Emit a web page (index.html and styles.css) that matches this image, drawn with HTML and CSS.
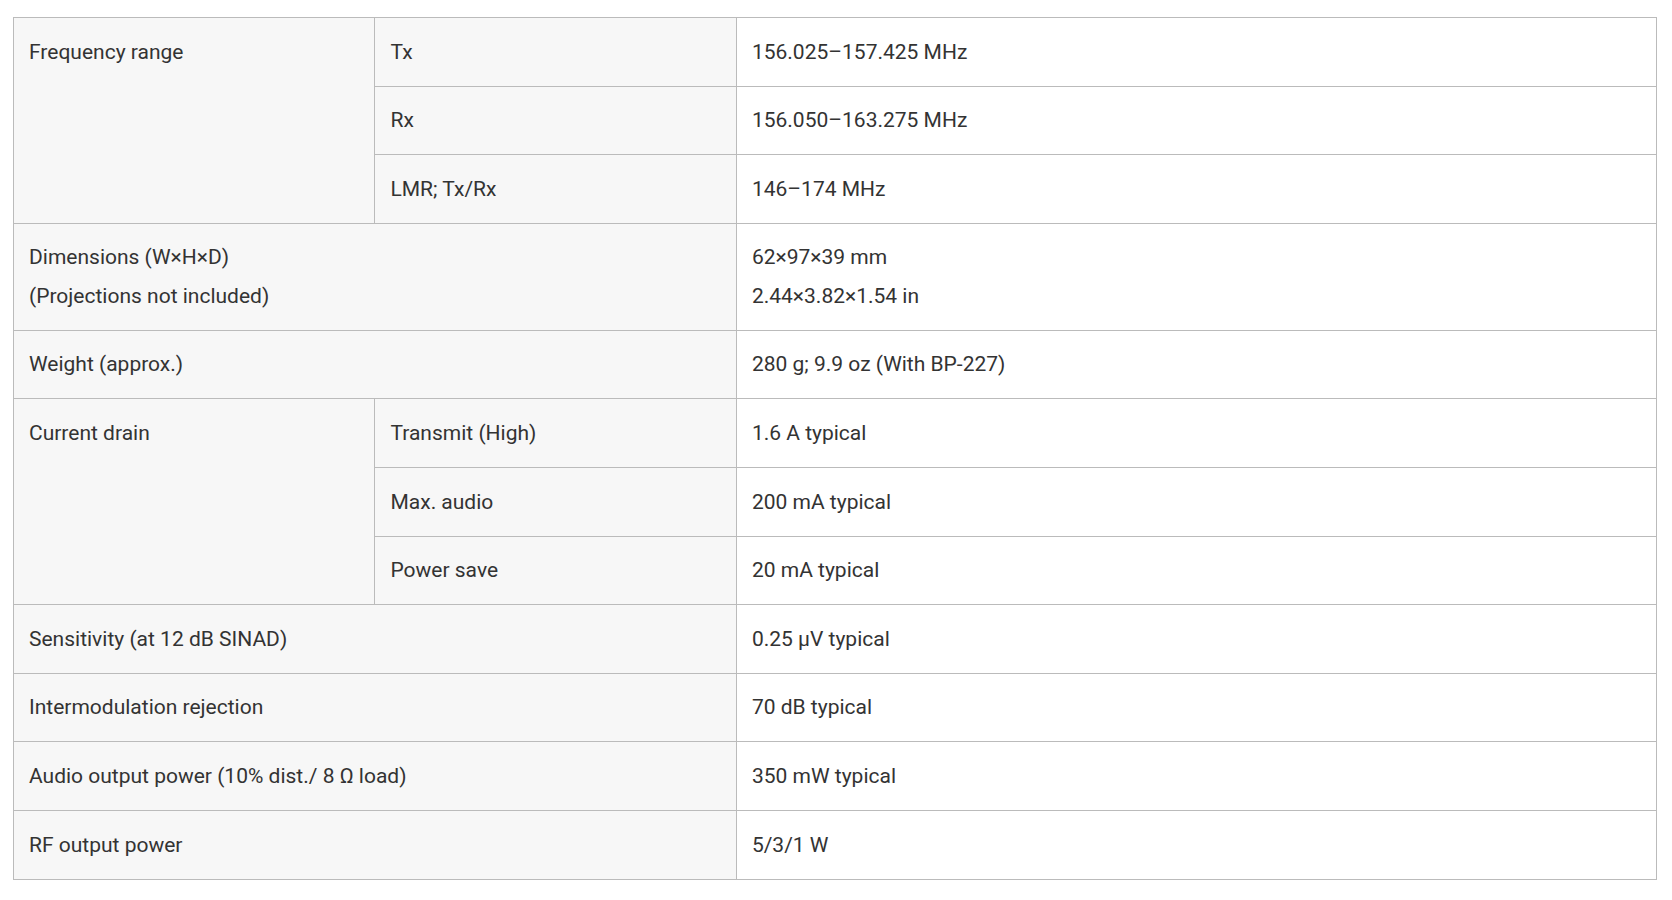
FILE: index.html
```html
<!DOCTYPE html>
<html lang="en">
<head>
<meta charset="utf-8">
<title>Specifications</title>
<link rel="stylesheet" href="styles.css">
</head>
<body>
<table class="spec">
  <colgroup>
    <col class="c1"><col class="c2"><col class="c3">
  </colgroup>
  <tbody>
    <tr>
      <th class="lab" rowspan="3">Frequency range</th>
      <td class="sub">Tx</td>
      <td class="val">156.025–157.425 MHz</td>
    </tr>
    <tr>
      <td class="sub">Rx</td>
      <td class="val">156.050–163.275 MHz</td>
    </tr>
    <tr>
      <td class="sub">LMR; Tx/Rx</td>
      <td class="val">146–174 MHz</td>
    </tr>
    <tr>
      <th class="lab" colspan="2">Dimensions (W×H×D)<br>(Projections not included)</th>
      <td class="val">62×97×39 mm<br>2.44×3.82×1.54 in</td>
    </tr>
    <tr>
      <th class="lab" colspan="2">Weight (approx.)</th>
      <td class="val">280 g; 9.9 oz (With BP-227)</td>
    </tr>
    <tr>
      <th class="lab" rowspan="3">Current drain</th>
      <td class="sub">Transmit (High)</td>
      <td class="val">1.6 A typical</td>
    </tr>
    <tr>
      <td class="sub">Max. audio</td>
      <td class="val">200 mA typical</td>
    </tr>
    <tr>
      <td class="sub">Power save</td>
      <td class="val">20 mA typical</td>
    </tr>
    <tr>
      <th class="lab" colspan="2">Sensitivity (at 12 dB SINAD)</th>
      <td class="val">0.25 μV typical</td>
    </tr>
    <tr>
      <th class="lab" colspan="2">Intermodulation rejection</th>
      <td class="val">70 dB typical</td>
    </tr>
    <tr>
      <th class="lab" colspan="2">Audio output power (10% dist./ 8 Ω load)</th>
      <td class="val">350 mW typical</td>
    </tr>
    <tr>
      <th class="lab" colspan="2">RF output power</th>
      <td class="val">5/3/1 W</td>
    </tr>
  </tbody>
</table>
</body>
</html>
```
FILE: styles.css
```css
html, body {
  margin: 0;
  padding: 0;
  background: #ffffff;
}

body {
  font-family: Roboto, "Liberation Sans", Arial, sans-serif;
  font-size: 21px;
  color: #333333;
}

.spec {
  margin: 17px 0 0 13px;
  width: 1644px;
  border-collapse: collapse;
  table-layout: fixed;
}

.c1 { width: 22%; }
.c2 { width: 22%; }
.c3 { width: 56%; }

.spec th,
.spec td {
  border: 1px solid #bbbbbb;
  padding: 14.6px 15px;
  line-height: 38.4px;
  text-align: left;
  vertical-align: top;
  font-weight: 400;
}

.lab,
.sub {
  background: #f7f7f7;
}

.val {
  background: #ffffff;
}
```
